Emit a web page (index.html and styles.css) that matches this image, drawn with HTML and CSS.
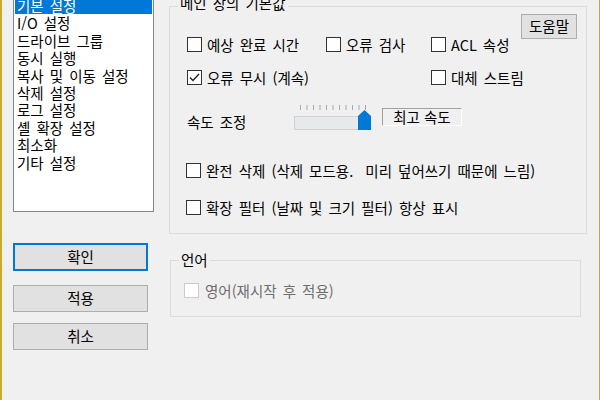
FILE: index.html
```html
<!DOCTYPE html>
<html lang="ko">
<head>
<meta charset="utf-8">
<title>옵션</title>
<link rel="stylesheet" href="styles.css">
</head>
<body>
<div class="window">
  <div class="left">
    <ul class="list">
      <li class="sel">기본 설정</li>
      <li>I/O 설정</li>
      <li>드라이브 그룹</li>
      <li>동시 실행</li>
      <li>복사 및 이동 설정</li>
      <li>삭제 설정</li>
      <li>로그 설정</li>
      <li>셸 확장 설정</li>
      <li>최소화</li>
      <li>기타 설정</li>
    </ul>
    <button class="btn default b-ok">확인</button>
    <button class="btn b-apply">적용</button>
    <button class="btn b-cancel">취소</button>
  </div>
  <div class="right">
    <div class="group main">
      <span class="legend">메인 창의 기본값</span>
      <div class="helprow"><button class="btn help">도움말</button></div>
      <div class="grid">
        <label class="chk"><span class="box"></span>예상 완료 시간</label>
        <label class="chk"><span class="box"></span>오류 검사</label>
        <label class="chk"><span class="box"></span>ACL 속성</label>
        <label class="chk"><span class="box"><svg width="13" height="13" viewBox="0 0 13 13"><polyline points="2,6.5 5,9.5 11,3" fill="none" stroke="#222" stroke-width="1.3"/></svg></span>오류 무시 (계속)</label>
        <span></span>
        <label class="chk"><span class="box"></span>대체 스트림</label>
      </div>
      <div class="speed">
        <span class="speed-label">속도 조정</span>
        <svg class="slider" width="77" height="28" viewBox="0 0 77 28">
          <g stroke="#a8a8a8" stroke-width="1">
            <line x1="6.5" y1="3" x2="6.5" y2="8"/>
            <line x1="13" y1="3" x2="13" y2="8"/>
            <line x1="19.5" y1="3" x2="19.5" y2="8"/>
            <line x1="26" y1="3" x2="26" y2="8"/>
            <line x1="32.5" y1="3" x2="32.5" y2="8"/>
            <line x1="39" y1="3" x2="39" y2="8"/>
            <line x1="45.5" y1="3" x2="45.5" y2="8"/>
            <line x1="52" y1="3" x2="52" y2="8"/>
            <line x1="58.5" y1="3" x2="58.5" y2="8"/>
            <line x1="65" y1="3" x2="65" y2="8"/>
            <line x1="71.5" y1="3" x2="71.5" y2="8"/>
          </g>
          <rect x="0.5" y="14.5" width="70" height="13" fill="#e7eaea" stroke="#d0d0d0"/>
          <polygon points="64,28 64,14 70.5,8 77,14 77,28" fill="#0078d7"/>
        </svg>
        <span class="speed-value">최고 속도</span>
      </div>
      <label class="chk row wipe"><span class="box"></span>완전 삭제 (삭제 모드용.&nbsp; 미리 덮어쓰기 때문에 느림)</label>
      <label class="chk row filter"><span class="box"></span>확장 필터 (날짜 및 크기 필터) 항상 표시</label>
    </div>
    <div class="group lang">
      <span class="legend">언어</span>
      <label class="chk disabled"><span class="box"></span>영어(재시작 후 적용)</label>
    </div>
  </div>
</div>
</body>
</html>
```
FILE: styles.css
```css
* { box-sizing: border-box; }
html, body { margin: 0; padding: 0; }
body {
  background: #f0f0f0;
  font-family: "Malgun Gothic", "Noto Sans CJK KR", "Noto Sans", sans-serif;
  font-size: 14.5px;
  word-spacing: 2px;
  color: #000;
}
.window {
  width: 600px;
  height: 400px;
  overflow: hidden;
  display: flex;
  align-items: flex-start;
  border-left: 2px solid #c6ae2a;
  border-right: 1px solid #c6ae2a;
}
.left {
  margin-left: 11px;
  width: 141px;
  display: flex;
  flex-direction: column;
}
.list {
  list-style: none;
  margin: -5px 0 0 0;
  padding: 1px;
  height: 217px;
  background: #fff;
  border: 1px solid #828790;
}
.list li {
  height: 17.4px;
  line-height: 17.4px;
  padding-left: 2px;
  white-space: nowrap;
}
.list li.sel {
  background: #0078d7;
  color: #fff;
}
.btn {
  font: inherit;
  word-spacing: inherit;
  color: #000;
  background: #e1e1e1;
  border: 1px solid #adadad;
  padding: 0;
  line-height: 1;
}
.left .btn {
  width: 135px;
  height: 27px;
}
.btn.default { border: 2px solid #0078d7; }
.b-ok { margin-top: 31px; height: 28px !important; }
.b-apply { margin-top: 14px; }
.b-cancel { margin-top: 11px; }

.right {
  margin-left: 15px;
  width: 418px;
}
.group {
  border: 1px solid #dcdcdc;
}
.legend {
  display: block;
  width: fit-content;
  margin: -9px 0 0 8px;
  padding: 0 2px;
  line-height: 16px;
  background: #f0f0f0;
}
.main {
  margin-top: 6px;
  height: 228px;
}
.main .legend {
  margin-top: -12px;
  margin-bottom: 3px;
}
.helprow {
  display: flex;
  justify-content: flex-end;
  padding-right: 9px;
  margin-top: 3px;
}
.help {
  width: 56px;
  height: 25px;
}
.grid {
  display: grid;
  grid-template-columns: 139px 105px auto;
  grid-auto-rows: 20px;
  row-gap: 13px;
  padding-left: 17px;
  margin-top: -5px;
}
.chk {
  display: flex;
  align-items: center;
  height: 20px;
  white-space: nowrap;
}
.box {
  width: 15px;
  height: 15px;
  border: 1px solid #333;
  background: #fff;
  margin-right: 5px;
  flex: none;
  display: flex;
  align-items: center;
  justify-content: center;
}
.speed {
  display: flex;
  align-items: flex-start;
  height: 30px;
  margin-top: 15px;
  padding-left: 17px;
}
.speed-label {
  width: 107px;
  line-height: 20px;
  margin-top: 10px;
}
.slider { display: block; }
.speed-value {
  margin-left: 11px;
  margin-top: 6px;
  width: 80px;
  height: 18px;
  line-height: 16px;
  text-align: center;
  word-spacing: 0;
  border: 1px solid;
  border-color: #a0a0a0 #fff #fff #a0a0a0;
}
.row { padding-left: 16px; }
.wipe { margin-top: 28px; }
.filter { margin-top: 17px; }

.lang {
  margin-top: 26px;
  margin-left: 1px;
  width: 411px;
  height: 57px;
}
.lang .chk {
  margin-top: 12px;
  padding-left: 13px;
}
.disabled { color: #6d6d6d; }
.disabled .box {
  border-color: #cccccc;
  margin-right: 6px;
}
```
